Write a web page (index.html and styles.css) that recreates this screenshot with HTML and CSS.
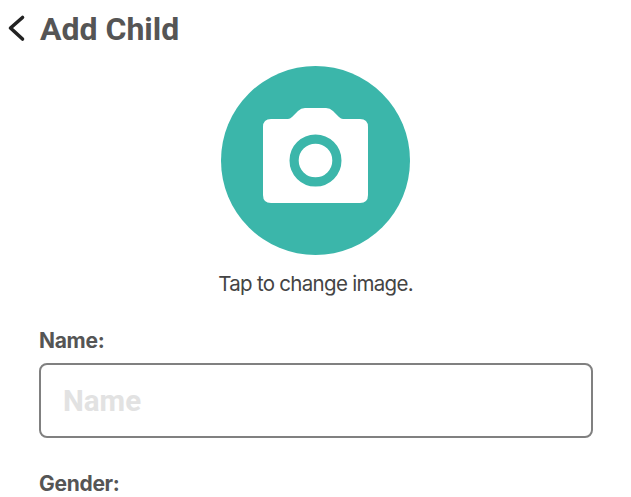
FILE: index.html
```html
<!DOCTYPE html>
<html lang="en">
<head>
  <meta charset="UTF-8">
  <title>Add Child</title>
  <meta name="viewport" content="width=device-width, initial-scale=1.0">
  <link rel="stylesheet" href="styles.css">
</head>
<body>
  <header class="top-bar">
    <button class="back-btn" aria-label="Back">
      <svg width="20" height="30" viewBox="0 0 20 30">
        <path d="M16.5 3.5 L4.5 14 L16.5 25" fill="none" stroke="#222" stroke-width="3.6" stroke-linecap="round" stroke-linejoin="round"/>
      </svg>
    </button>
    <h1>Add Child</h1>
  </header>

  <div class="avatar-block">
    <div class="avatar">
      <svg width="189" height="189" viewBox="0 0 189 189">
        <circle cx="94.5" cy="94.5" r="94.5" fill="#3bb6aa"/>
        <path d="M50 53 H67 Q69 53 71 51 L77 45 Q80 42 84 42 H105 Q109 42 112 45 L118 51 Q120 53 122 53 H139 Q147 53 147 61 V129 Q147 137 139 137 H50 Q42 137 42 129 V61 Q42 53 50 53 Z" fill="#fff"/>
        <circle cx="94.5" cy="94.5" r="21.4" fill="none" stroke="#3bb6aa" stroke-width="9.2"/>
      </svg>
    </div>
    <p class="avatar-hint">Tap to change image.</p>
  </div>

  <form class="child-form">
    <label class="field-label" for="name">Name:</label>
    <input class="field-input" id="name" type="text" placeholder="Name">
    <label class="field-label gender-label">Gender:</label>
  </form>
</body>
</html>
```

FILE: styles.css
```css
* { box-sizing: border-box; }

html, body {
  height: 100%;
  overflow: hidden;
}

body {
  margin: 0;
  background: #fff;
  color: #555;
  font-family: 'Inter', 'Liberation Sans', sans-serif;
}

.top-bar {
  display: flex;
  align-items: center;
  gap: 14px;
  height: 58px;
  padding-left: 6px;
}

.back-btn {
  display: flex;
  padding: 0;
  border: none;
  background: none;
  cursor: pointer;
}

h1 {
  margin: 0;
  font-family: 'Roboto', sans-serif;
  font-size: 32px;
  font-weight: 700;
  line-height: 56px;
  color: #555;
}

.avatar-block {
  display: flex;
  flex-direction: column;
  align-items: center;
  margin-top: 8px;
}

.avatar {
  display: flex;
}

.avatar-hint {
  margin: 16px 0 0;
  font-size: 20.5px;
  line-height: 26px;
  letter-spacing: -0.7px;
  color: #444;
}

.child-form {
  display: flex;
  flex-direction: column;
  padding: 0 38px 0 39px;
  margin-top: 33px;
}

.field-label {
  font-size: 21px;
  font-weight: 700;
  line-height: 22px;
  letter-spacing: -0.3px;
  color: #555;
}

.field-input {
  width: 100%;
  height: 75px;
  margin-top: 11px;
  padding: 1px 22px 0;
  border: 2px solid #808080;
  border-radius: 8px;
  background: #fff;
  font-family: 'Roboto', sans-serif;
  font-size: 29.5px;
  font-weight: 700;
}

.field-input::placeholder {
  color: #e2e2e2;
  opacity: 1;
}

.gender-label {
  margin-top: 35px;
}
```
